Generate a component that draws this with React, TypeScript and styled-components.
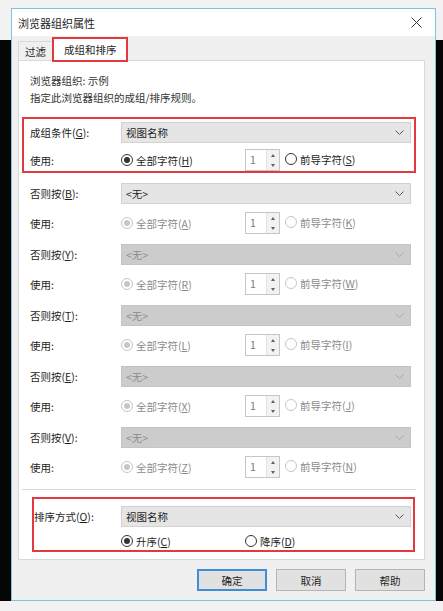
import styled, { createGlobalStyle, css } from "styled-components";

const GlobalStyle = createGlobalStyle`
   html, body {
      margin: 0;
      padding: 0;
   }
   body {
      background: linear-gradient(#f2f2f2 0 40px, #050505 40px);
      font-family: "Noto Sans CJK SC", "Microsoft YaHei", sans-serif;
      font-size: 10.5px;
      color: #1e1e1e;
   }
`;

interface Fallback {
   key: string;
   all: string;
   lead: string;
   enabled?: boolean;
}

const fallbacks: Fallback[] = [
   { key: "B", all: "A", lead: "K", enabled: true },
   { key: "Y", all: "R", lead: "W" },
   { key: "T", all: "L", lead: "I" },
   { key: "E", all: "X", lead: "J" },
   { key: "V", all: "Z", lead: "N" },
];

const Chevron = ({ disabled }: { disabled?: boolean }) => (
   <svg width="9" height="5" viewBox="0 0 9 5">
      <polyline
         points="0.5,0.5 4.5,4.5 8.5,0.5"
         fill="none"
         stroke={disabled ? "#a9a9a9" : "#5a5a5a"}
         strokeWidth="1"
      />
   </svg>
);

const RadioOption = ({
   text,
   hotkey,
   checked,
   disabled,
}: {
   text: string;
   hotkey: string;
   checked?: boolean;
   disabled?: boolean;
}) => (
   <Option $disabled={disabled}>
      <Radio $disabled={disabled}>{checked && <Dot $disabled={disabled} />}</Radio>
      <span>
         {text}(<u>{hotkey}</u>)
      </span>
   </Option>
);

const Spinner = () => (
   <SpinBox>
      <SpinText>1</SpinText>
      <SpinButtons>
         <SpinArrow $up />
         <SpinArrow />
      </SpinButtons>
   </SpinBox>
);

const App = () => {
   return (
      <>
         <GlobalStyle />
         <Window>
            <TitleBar>
               <span>浏览器组织属性</span>
               <svg width="11" height="11" viewBox="0 0 11 11">
                  <path d="M0.5 0.5 L10.5 10.5 M10.5 0.5 L0.5 10.5" stroke="#333" strokeWidth="1" />
               </svg>
            </TitleBar>
            <Body>
               <TabStrip>
                  <Tab>过滤</Tab>
                  <Tab $active>成组和排序</Tab>
               </TabStrip>
               <Panel>
                  <Info>浏览器组织: 示例</Info>
                  <Info>指定此浏览器组织的成组/排序规则。</Info>
                  <Groups>
                     <Group $outlined>
                        <FieldRow $label={91}>
                           <span>
                              成组条件(<u>G</u>):
                           </span>
                           <Combo>
                              <span>视图名称</span>
                              <Chevron />
                           </Combo>
                        </FieldRow>
                        <FieldRow $label={91}>
                           <span>使用:</span>
                           <RadioOption text="全部字符" hotkey="H" checked />
                           <Spinner />
                           <Lead>
                              <RadioOption text="前导字符" hotkey="S" />
                           </Lead>
                        </FieldRow>
                     </Group>
                     {fallbacks.map((f) => (
                        <Group key={f.key}>
                           <FieldRow $label={91}>
                              <span>
                                 否则按(<u>{f.key}</u>):
                              </span>
                              <Combo $disabled={!f.enabled}>
                                 <span>&lt;无&gt;</span>
                                 <Chevron disabled={!f.enabled} />
                              </Combo>
                           </FieldRow>
                           <FieldRow $label={91}>
                              <span>使用:</span>
                              <RadioOption text="全部字符" hotkey={f.all} checked disabled />
                              <Spinner />
                              <Lead>
                                 <RadioOption text="前导字符" hotkey={f.lead} disabled />
                              </Lead>
                           </FieldRow>
                        </Group>
                     ))}
                  </Groups>
                  <Separator />
                  <SortGroup $outlined>
                     <FieldRow $label={87}>
                        <span>
                           排序方式(<u>O</u>):
                        </span>
                        <Combo>
                           <span>视图名称</span>
                           <Chevron />
                        </Combo>
                     </FieldRow>
                     <SortRow $label={87}>
                        <span />
                        <RadioOption text="升序" hotkey="C" checked />
                        <RadioOption text="降序" hotkey="D" />
                     </SortRow>
                  </SortGroup>
               </Panel>
               <ButtonRow>
                  <Button $primary>确定</Button>
                  <Button>取消</Button>
                  <Button>帮助</Button>
               </ButtonRow>
            </Body>
         </Window>
      </>
   );
};

export default App;

const Window = styled.div`
   box-sizing: border-box;
   width: 425px;
   margin: 8px 0 0 11px;
   border: 1px solid #7cc4d9;
   background: #f0f0f0;
   display: flex;
   flex-direction: column;
`;

const TitleBar = styled.div`
   height: 27px;
   background: #fff;
   display: flex;
   align-items: center;
   justify-content: space-between;
   padding: 0 13px 0 6px;
   font-size: 11px;
   color: #222;
`;

const Body = styled.div`
   display: flex;
   flex-direction: column;
   padding: 1px 10px 9px 6px;
`;

const TabStrip = styled.div`
   display: flex;
   align-items: flex-end;
   height: 24px;
`;

const Tab = styled.div<{ $active?: boolean }>`
   box-sizing: border-box;
   display: flex;
   align-items: center;
   ${(p) =>
      p.$active
         ? css`
              position: relative;
              z-index: 1;
              height: 25px;
              margin-bottom: -1px;
              padding: 0 9px 0 10px;
              background: #fff;
              border: 2px solid #e0393e;
           `
         : css`
              height: 20px;
              padding: 0 6px;
              border: 1px solid #d9d9d9;
              border-bottom: none;
              border-right: none;
           `}
`;

const Panel = styled.div`
   display: flex;
   flex-direction: column;
   margin-top: -1px;
   background: #fff;
   border: 1px solid #d9d9d9;
   padding: 11px 8px 7px 3px;
`;

const Info = styled.div`
   padding-left: 8px;
   line-height: 17px;
   color: #333;
`;

const Groups = styled.div`
   display: flex;
   flex-direction: column;
   gap: 10px;
   margin-top: 11px;
`;

const Group = styled.div<{ $outlined?: boolean }>`
   display: flex;
   flex-direction: column;
   gap: ${(p) => (p.$outlined ? 6 : 8)}px;
   ${(p) =>
      p.$outlined
         ? css`
              border: 2px solid #e0393e;
              padding: 3px 3px 0 6px;
           `
         : css`
              padding: 0 5px 0 8px;
           `}
`;

const SortGroup = styled(Group)`
   margin: 7px 1px 0 10px;
   padding: 7px 2px 1px 0;
`;

const FieldRow = styled.div<{ $label: number }>`
   display: grid;
   grid-template-columns: ${(p) => p.$label}px 124px 35px 1fr;
   align-items: center;
   min-height: 21px;
   white-space: nowrap;
`;

const SortRow = styled(FieldRow)`
   min-height: 16px;
   & > *:last-child {
      grid-column: 3 / -1;
   }
`;

const Combo = styled.div<{ $disabled?: boolean }>`
   grid-column: 2 / -1;
   box-sizing: border-box;
   height: 21px;
   display: flex;
   align-items: center;
   justify-content: space-between;
   padding: 0 6px 0 4px;
   background: ${(p) => (p.$disabled ? "#cccccc" : "#e5e5e5")};
   border: 1px solid ${(p) => (p.$disabled ? "#c4c4c4" : "#d2d2d2")};
   color: ${(p) => (p.$disabled ? "#8b8b8b" : "#1e1e1e")};
`;

const Option = styled.label<{ $disabled?: boolean }>`
   display: inline-flex;
   align-items: center;
   gap: 3px;
   color: ${(p) => (p.$disabled ? "#8c8c8c" : "#1e1e1e")};
`;

const Radio = styled.span<{ $disabled?: boolean }>`
   box-sizing: border-box;
   width: 12px;
   height: 12px;
   border-radius: 50%;
   border: 1px solid ${(p) => (p.$disabled ? "#c6c6c6" : "#333")};
   background: #fff;
   display: grid;
   place-items: center;
`;

const Dot = styled.span<{ $disabled?: boolean }>`
   width: 6px;
   height: 6px;
   border-radius: 50%;
   background: ${(p) => (p.$disabled ? "#c6c6c6" : "#333")};
`;

const Lead = styled.div`
   padding-left: 5px;
`;

const SpinBox = styled.div`
   box-sizing: border-box;
   width: 35px;
   height: 22px;
   display: flex;
   background: #fff;
   border: 1px solid #c6c6c6;
`;

const SpinText = styled.span`
   flex: 1;
   padding: 2px 0 0 4px;
   color: #7a7a7a;
`;

const SpinButtons = styled.div`
   width: 12px;
   display: flex;
   flex-direction: column;
   background: #f2f2f2;
   border-left: 1px solid #e2e2e2;
`;

const SpinArrow = styled.span<{ $up?: boolean }>`
   flex: 1;
   display: grid;
   place-items: center;
   &::after {
      content: "";
      border-left: 2.5px solid transparent;
      border-right: 2.5px solid transparent;
      ${(p) =>
         p.$up
            ? css`
                 border-bottom: 3px solid #606060;
              `
            : css`
                 border-top: 3px solid #606060;
              `}
   }
`;

const Separator = styled.div`
   height: 1px;
   margin-top: 11px;
   background: #d7d7d7;
`;

const ButtonRow = styled.div`
   display: flex;
   justify-content: flex-end;
   gap: 9px;
   margin-top: 9px;
`;

const Button = styled.button<{ $primary?: boolean }>`
   box-sizing: border-box;
   width: 70px;
   height: 22px;
   padding: 0;
   font: inherit;
   color: #1e1e1e;
   background: #e1e1e1;
   border: ${(p) => (p.$primary ? "2px solid #3c8fd6" : "1px solid #b4b4b4")};
`;
